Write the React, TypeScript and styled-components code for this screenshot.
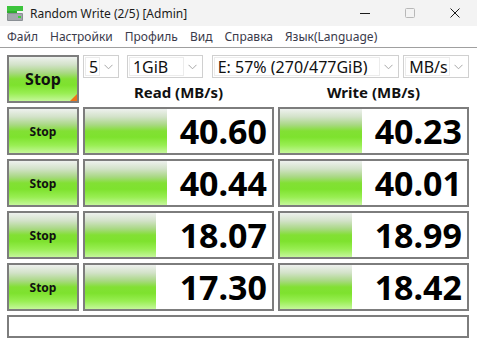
import React from 'react';
import styled, { createGlobalStyle } from 'styled-components';

const GlobalStyle = createGlobalStyle`
  html, body {
    margin: 0;
    padding: 0;
    background: #ffffff;
  }
  body {
    width: 477px;
    height: 344px;
    overflow: hidden;
    font-family: "Noto Sans", "Open Sans", sans-serif;
  }
`;

const GREEN = `linear-gradient(to bottom,
  #eef1ee 0%,
  #d2e2c8 18%,
  #a9d884 36%,
  #82e034 50%,
  #7ee22e 64%,
  #98ee52 82%,
  #c4f79a 100%)`;

const results = [
  { read: 40.6, write: 40.23 },
  { read: 40.44, write: 40.01 },
  { read: 18.07, write: 18.99 },
  { read: 17.3, write: 18.42 },
];

// meters use a log scale, like the original tool
const barWidth = (v: number) => Math.round(34 + 29.7 * Math.log10(v));

const Window = styled.div`
  width: 477px;
  height: 344px;
  display: flex;
  flex-direction: column;
  background: #ffffff;
`;

const TitleBar = styled.div`
  flex-shrink: 0;
  height: 26px;
  display: flex;
  align-items: center;
  background: #f3f3f3;
  padding-left: 7px;
`;

const TitleText = styled.span`
  margin-left: 7px;
  font-size: 12px;
  color: #1b1b1b;
  flex: 1;
`;

const WinControls = styled.div`
  display: flex;
  align-items: center;
  height: 100%;
`;

const WinButton = styled.div`
  width: 45px;
  height: 100%;
  display: flex;
  align-items: center;
  justify-content: center;
`;

const MenuBar = styled.div`
  flex-shrink: 0;
  height: 21px;
  display: flex;
  align-items: center;
  gap: 12px;
  padding-left: 7px;
  background: #ffffff;
  border-bottom: 1px solid #a0a0a0;
`;

const MenuItem = styled.span`
  font-size: 12px;
  color: #3a3a4a;
`;

const Main = styled.div`
  display: grid;
  grid-template-columns: 72px 191px 191px;
  grid-template-rows: repeat(5, 48px) 23px;
  gap: 4px;
  padding: 7px 0 0 7px;
`;

const StopButton = styled.div<{ $big?: boolean }>`
  position: relative;
  box-sizing: border-box;
  border: 2px solid #7d7d7d;
  background: ${GREEN};
  display: flex;
  align-items: center;
  justify-content: center;
  font-weight: 700;
  font-size: ${({ $big }) => ($big ? '16px' : '12px')};
  color: #111;
`;

const Corner = styled.div`
  position: absolute;
  right: 0;
  bottom: 0;
  width: 0;
  height: 0;
  border-left: 7px solid transparent;
  border-bottom: 7px solid #f07418;
`;

const TopPanel = styled.div`
  grid-column: 2 / 4;
  display: flex;
  flex-direction: column;
`;

const ComboRow = styled.div`
  display: flex;
  height: 23px;
`;

const Combo = styled.div<{ $w: number; $mr: number }>`
  box-sizing: border-box;
  width: ${({ $w }) => $w}px;
  margin-right: ${({ $mr }) => $mr}px;
  height: 23px;
  border: 1px solid #d0d0d0;
  display: flex;
  align-items: stretch;
  padding: 1px;
  background: #fff;
`;

const ComboField = styled.div`
  flex: 1;
  border: 1px solid #ececec;
  display: flex;
  align-items: center;
  padding-left: 3px;
  font-size: 16px;
  color: #111;
  white-space: nowrap;
  overflow: hidden;
`;

const ComboArrow = styled.div`
  width: 17px;
  display: flex;
  align-items: center;
  justify-content: center;
`;

const HeaderRow = styled.div`
  flex: 1;
  display: grid;
  grid-template-columns: 191px 191px;
  gap: 4px;
  align-items: center;
  padding-top: 2px;
`;

const HeaderCell = styled.div`
  text-align: center;
  font-weight: 700;
  font-size: 15px;
  color: #111;
`;

const Meter = styled.div`
  position: relative;
  box-sizing: border-box;
  border: 2px solid #7d7d7d;
  background: #ffffff;
  display: flex;
  align-items: center;
  justify-content: flex-end;
  padding-right: 5px;
`;

const MeterBar = styled.div`
  position: absolute;
  left: 0;
  top: 0;
  bottom: 0;
  background: ${GREEN};
`;

const MeterValue = styled.span`
  position: relative;
  font-weight: 700;
  font-size: 34px;
  color: #000;
  line-height: 1;
`;

const StatusBox = styled.div`
  grid-column: 1 / 4;
  box-sizing: border-box;
  border: 2px solid #7d7d7d;
  background: #fff;
`;

const Chevron = () => (
  <svg width="9" height="6" viewBox="0 0 9 6">
    <path d="M0.5 0.8 L4.5 4.8 L8.5 0.8" fill="none" stroke="#a8a8a8" strokeWidth="1" />
  </svg>
);

const AppIcon = () => (
  <svg width="16" height="15" viewBox="0 0 16 15">
    <rect x="0" y="0" width="16" height="5" fill="#3cc43c" />
    <rect x="0" y="5" width="10" height="2" fill="#2fae2f" />
    <rect x="0" y="7" width="16" height="8" rx="1" fill="#8a8f94" />
    <rect x="1" y="8" width="14" height="6" fill="#a3a8ac" />
    <rect x="11" y="10" width="3" height="2" fill="#3cd03c" />
  </svg>
);

const App = () => (
  <Window>
    <GlobalStyle />
    <TitleBar>
      <AppIcon />
      <TitleText>Random Write (2/5) [Admin]</TitleText>
      <WinControls>
        <WinButton>
          <svg width="10" height="10" viewBox="0 0 10 10">
            <path d="M0 5.5 H10" stroke="#1b1b1b" strokeWidth="1" />
          </svg>
        </WinButton>
        <WinButton>
          <svg width="10" height="10" viewBox="0 0 10 10">
            <rect x="0.5" y="0.5" width="9" height="9" rx="1" fill="none" stroke="#b8b8b8" strokeWidth="1" />
          </svg>
        </WinButton>
        <WinButton>
          <svg width="10" height="10" viewBox="0 0 10 10">
            <path d="M0.5 0.5 L9.5 9.5 M9.5 0.5 L0.5 9.5" stroke="#1b1b1b" strokeWidth="1" />
          </svg>
        </WinButton>
      </WinControls>
    </TitleBar>
    <MenuBar>
      <MenuItem>Файл</MenuItem>
      <MenuItem>Настройки</MenuItem>
      <MenuItem>Профиль</MenuItem>
      <MenuItem>Вид</MenuItem>
      <MenuItem>Справка</MenuItem>
      <MenuItem>Язык(Language)</MenuItem>
    </MenuBar>
    <Main>
      <StopButton $big>
        Stop
        <Corner />
      </StopButton>
      <TopPanel>
        <ComboRow>
          <Combo $w={36} $mr={8}>
            <ComboField>5</ComboField>
            <ComboArrow><Chevron /></ComboArrow>
          </Combo>
          <Combo $w={76} $mr={9}>
            <ComboField>1GiB</ComboField>
            <ComboArrow><Chevron /></ComboArrow>
          </Combo>
          <Combo $w={188} $mr={4}>
            <ComboField>E: 57% (270/477GiB)</ComboField>
            <ComboArrow><Chevron /></ComboArrow>
          </Combo>
          <Combo $w={66} $mr={0}>
            <ComboField>MB/s</ComboField>
            <ComboArrow><Chevron /></ComboArrow>
          </Combo>
        </ComboRow>
        <HeaderRow>
          <HeaderCell>Read (MB/s)</HeaderCell>
          <HeaderCell>Write (MB/s)</HeaderCell>
        </HeaderRow>
      </TopPanel>
      {results.map((r, i) => (
        <React.Fragment key={i}>
          <StopButton>Stop</StopButton>
          <Meter>
            <MeterBar style={{ width: barWidth(r.read) }} />
            <MeterValue>{r.read.toFixed(2)}</MeterValue>
          </Meter>
          <Meter>
            <MeterBar style={{ width: barWidth(r.write) }} />
            <MeterValue>{r.write.toFixed(2)}</MeterValue>
          </Meter>
        </React.Fragment>
      ))}
      <StatusBox />
    </Main>
  </Window>
);

export default App;
